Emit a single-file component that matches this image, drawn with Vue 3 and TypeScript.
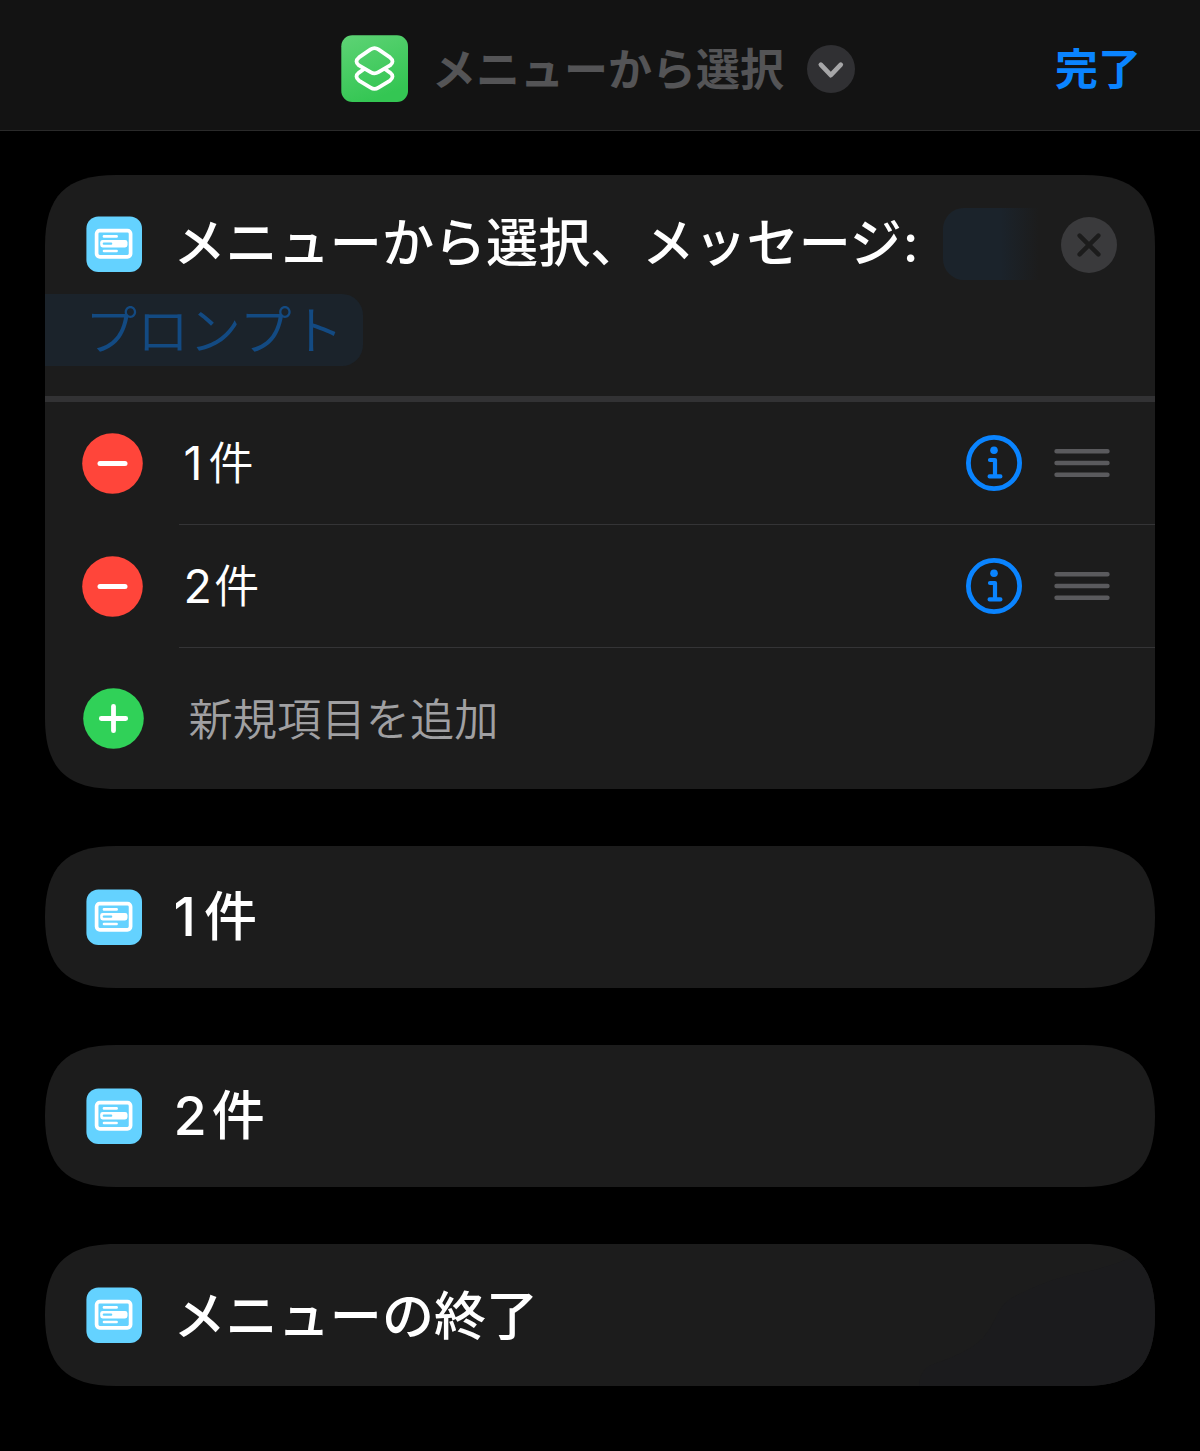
<template>
  <div class="editor">
    <header class="nav">
      <div class="nav-title">
        <svg class="app-icon" viewBox="0 0 67 67">
          <defs>
            <linearGradient id="appGreen" x1="0" y1="0" x2="0.4" y2="1">
              <stop offset="0" stop-color="#5ed375" />
              <stop offset="1" stop-color="#34c653" />
            </linearGradient>
          </defs>
          <rect x="0.3" y="0.3" width="66.7" height="66.7" rx="11" fill="url(#appGreen)" />
          <g fill="none" stroke="#fff" stroke-width="3.8" stroke-linejoin="round">
            <path d="M29.6 14.4Q33.5 11.9 37.4 14.4L49 22.4Q54 26.4 49 30.4L37.4 37.2Q33.5 39.6 29.6 37.2L18 30.4Q13 26.4 18 22.4Z" />
            <path d="M23.5 33.8L18 37.6Q13 41.6 18 45.6L29.6 52.6Q33.5 55.2 37.4 52.6L49 45.6Q54 41.6 49 37.6L43.5 33.8" />
          </g>
        </svg>
        <span class="title-text">メニューから選択</span>
        <svg class="chevron" viewBox="0 0 48 48">
          <circle cx="24" cy="24" r="24" fill="#303033" />
          <path d="M13.8 19.6L23.8 30.2L33.8 19.6" fill="none" stroke="#a6a6a8" stroke-width="4.6" stroke-linecap="round" stroke-linejoin="round" />
        </svg>
      </div>
      <button class="done">完了</button>
    </header>

    <main class="actions">
      <section class="card menu-card">
        <div class="prompt">
          <div class="prompt-line">
            <MenuIcon />
            <span class="action-title">メニューから選択、メッセージ<span class="colon">:</span></span>
            <span class="token token-start"></span>
            <svg class="close" viewBox="0 0 56 56">
              <circle cx="28" cy="28" r="28" fill="#3a3a3c" />
              <path d="M18.6 18.6L37.4 37.4M37.4 18.6L18.6 37.4" stroke="#1c1c1c" stroke-width="4.4" stroke-linecap="round" />
            </svg>
          </div>
          <span class="token token-end">プロンプト</span>
        </div>

        <div v-for="item in items" :key="item.count" class="row">
          <svg class="badge" viewBox="0 0 61 61">
            <circle cx="30.5" cy="30.5" r="30.3" fill="#ff453a" />
            <path d="M18 30.5H43" stroke="#fff" stroke-width="5" stroke-linecap="round" />
          </svg>
          <div class="row-body">
            <span class="item-text"><span class="num" :class="{ narrow: item.count === 1 }">{{ item.count }}</span>{{ item.unit }}</span>
            <svg class="info" viewBox="0 0 56 56">
              <g fill="none" stroke="#0a84ff" stroke-linecap="round" stroke-linejoin="round">
                <circle cx="28" cy="28" r="25.6" stroke-width="4.8" />
                <path d="M24 25H29V41.4M23.6 41.4H34.4" stroke-width="4.2" />
              </g>
              <circle cx="28" cy="15.2" r="3.8" fill="#0a84ff" />
            </svg>
            <svg class="handle" viewBox="0 0 56 32">
              <path d="M2.5 4.3H53.5M2.5 16H53.5M2.5 27.7H53.5" stroke="#5a5a5d" stroke-width="4.4" stroke-linecap="round" />
            </svg>
          </div>
        </div>

        <div class="add-row">
          <svg class="badge" viewBox="0 0 61 61">
            <circle cx="30.5" cy="30.5" r="30.3" fill="#30d158" />
            <path d="M18.3 30.5H42.7M30.5 18.3V42.7" stroke="#fff" stroke-width="4.8" stroke-linecap="round" />
          </svg>
          <span class="placeholder">新規項目を追加</span>
        </div>
      </section>

      <section v-for="item in items" :key="item.count" class="card case-card">
        <MenuIcon />
        <span class="action-title case-title"><span class="num" :class="{ narrow: item.count === 1 }">{{ item.count }}</span>{{ item.unit }}</span>
      </section>

      <section class="card case-card">
        <svg class="shade" viewBox="0 0 1110 142">
          <path d="M874 142Q875 126 886 121Q925 108 938 94Q946 84 951 73Q957 58 972 51Q1010 32 1045 27Q1080 18 1096 8L1110 8V142Z" fill="#1b1b1d" />
        </svg>
        <MenuIcon />
        <span class="action-title">メニューの終了</span>
      </section>
    </main>
  </div>
</template>

<script setup lang="ts">
import { h } from 'vue'

interface MenuItem {
  count: number
  unit: string
}

const items: MenuItem[] = [
  { count: 1, unit: '件' },
  { count: 2, unit: '件' },
]

const bar = (x: number, y: number, width: number, height: number, rx: number, fill: string) =>
  h('rect', { x, y, width, height, rx, fill })

// blue "choose from menu" action glyph
const MenuIcon = () =>
  h('svg', { viewBox: '-0.4 -0.5 56 56', class: 'menu-icon' }, [
    bar(0, 0, 55.6, 55.5, 12, '#64d2ff'),
    h('rect', { x: 10.2, y: 14.1, width: 34, height: 26.2, rx: 3.2, fill: 'none', stroke: '#fff', 'stroke-width': 3.7 }),
    bar(16.3, 18.6, 15.2, 2.6, 1.2, '#fff'),
    bar(13.8, 23.5, 27.3, 7.5, 2.4, '#fff'),
    bar(16.3, 26.1, 9.6, 2.2, 1.1, '#64d2ff'),
    bar(16.3, 33.2, 15.2, 2.6, 1.2, '#fff'),
  ])
</script>

<style>
body { background: #000; }
.menu-icon { width: 56px; height: 56px; flex: none; }
</style>

<style scoped>
.editor {
  width: 1200px; height: 1451px; background: #000; color: #fff; overflow: hidden;
  font-family: 'Noto Sans CJK JP', sans-serif;
}
.nav {
  box-sizing: border-box; height: 131px; padding: 7px 59px 0 341px;
  display: flex; align-items: center; justify-content: space-between;
  background: #131313; border-bottom: 1px solid #2a2a2a;
}
.nav-title { display: flex; align-items: center; }
.app-icon { width: 67px; height: 67px; }
.title-text {
  margin-left: 24px; width: 352px; padding-bottom: 4px; font-size: 44px; line-height: 60px;
  font-weight: 700; color: #545456; white-space: nowrap;
}
.chevron { width: 48px; height: 48px; margin: 1px 0 0 22.7px; }
.done {
  padding: 0 0 5px; border: 0; background: none; color: #0a84ff;
  font-family: inherit; font-size: 43px; line-height: 60px; font-weight: 700;
}
.actions { display: flex; flex-direction: column; gap: 57px; padding: 44px 45px 0; }
.card { background: #1c1c1c; }
.menu-card {
  height: 614px;
  clip-path: path('M0 71C0 21 21 0 71 0H1039C1089 0 1110 21 1110 71V543C1110 593 1089 614 1039 614H71C21 614 0 593 0 543Z');
}
.prompt { box-sizing: border-box; height: 227px; padding-top: 33px; border-bottom: 6px solid #323234; }
.prompt-line { display: flex; align-items: center; height: 72px; padding: 0 38px 0 41px; }
.action-title {
  flex: none; margin-left: 31.5px; padding-bottom: 4px;
  font-size: 52.1px; line-height: 72px; font-weight: 500; white-space: nowrap;
}
.num, .colon { font-family: Inter, sans-serif; }
.colon { margin-left: 1px; }
.token { background: #1b232b; }
.token-start {
  flex: none; width: 96px; height: 72px; margin-left: auto; border-radius: 21px 0 0 21px;
  background: linear-gradient(90deg, #1b232b 60%, #1c1c1c 100%);
}
.close { flex: none; width: 56px; height: 56px; margin: 1px 0 0 22px; }
.token-end {
  display: block; box-sizing: border-box; width: 318px; height: 72px; margin-top: 14px; padding-left: 40px;
  border-radius: 0 21px 21px 0; color: #134a82; font-size: 52px; line-height: 68px; font-weight: 350; white-space: nowrap;
}
.row { display: flex; align-items: center; height: 123px; padding-left: 37.5px; }
.badge { width: 61px; height: 61px; flex: none; margin: -1px 0 0 -0.5px; }
.row-body {
  flex: 1; box-sizing: border-box; height: 123px; margin-left: 35.5px; padding: 0 45px 0 5px;
  display: flex; align-items: center; border-bottom: 1px solid #343436;
}
.item-text { flex: 1; padding-bottom: 2px; font-size: 45px; line-height: 60px; font-weight: 350; }
.item-text .num { font-size: 46.5px; margin-right: 2.5px; font-weight: 400; }
.item-text .narrow { margin-right: 6px; }
.info { width: 56px; height: 56px; }
.handle { width: 56px; height: 32px; margin-left: 32px; }
.add-row { display: flex; align-items: center; height: 141px; padding-left: 38.5px; }
.placeholder { margin-left: 44.5px; padding-bottom: 3px; font-size: 44.3px; line-height: 60px; font-weight: 350; color: #a0a0a2; }
.case-card {
  position: relative; display: flex; align-items: center; height: 142px; padding-left: 41px;
  clip-path: path('M0 71C0 21 21 0 71 0H1039C1089 0 1110 21 1110 71C1110 121 1089 142 1039 142H71C21 142 0 121 0 71Z');
}
.case-title { font-size: 53px; }
.case-title .num { font-size: 54px; margin-right: 5px; }
.case-title .narrow { margin-right: 8px; }
.shade { position: absolute; inset: 0; width: 1110px; height: 142px; }
</style>
